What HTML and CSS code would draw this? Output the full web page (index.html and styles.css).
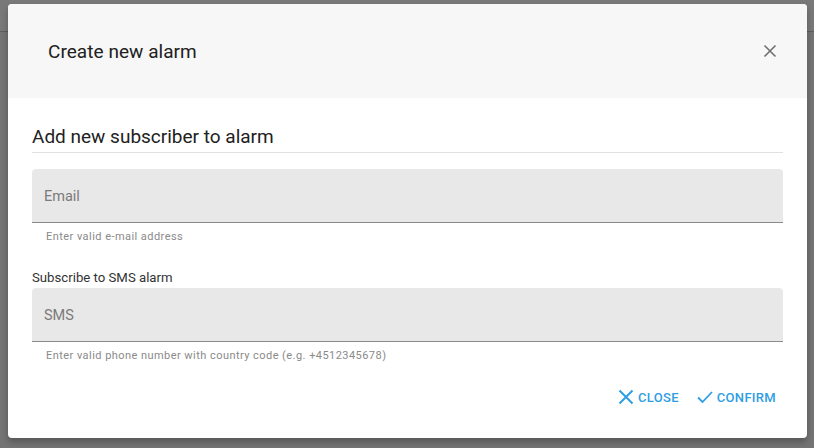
FILE: index.html
```html
<!DOCTYPE html>
<html>
<head>
<meta charset="utf-8">
<link rel="stylesheet" href="styles.css">
</head>
<body>
<div class="backdrop">
  <div class="topbar"></div>
  <div class="dialog">
    <div class="dialog-header">
      <h1 class="dialog-title">Create new alarm</h1>
      <button class="icon-close" aria-label="Close">
        <svg width="14" height="14" viewBox="0 0 14 14"><path d="M1.5 1.5L12.5 12.5M12.5 1.5L1.5 12.5" stroke="#6f6f6f" stroke-width="1.6" fill="none"/></svg>
      </button>
    </div>
    <div class="dialog-body">
      <h2 class="section-title">Add new subscriber to alarm</h2>
      <div class="field">
        <div class="field-box"><span class="placeholder">Email</span></div>
        <div class="hint">Enter valid e-mail address</div>
      </div>
      <div class="field-label">Subscribe to SMS alarm</div>
      <div class="field">
        <div class="field-box"><span class="placeholder">SMS</span></div>
        <div class="hint">Enter valid phone number with country code (e.g. +4512345678)</div>
      </div>
      <div class="actions">
        <button class="btn">
          <svg width="16" height="16" viewBox="0 0 16 16"><path d="M1.5 1.5L14.5 14.5M14.5 1.5L1.5 14.5" stroke="currentColor" stroke-width="2" fill="none"/></svg>
          CLOSE
        </button>
        <button class="btn">
          <svg width="16" height="16" viewBox="0 0 16 16"><path d="M1 8.5L5.5 13L15 3" stroke="currentColor" stroke-width="1.8" fill="none"/></svg>
          CONFIRM
        </button>
      </div>
    </div>
  </div>
</div>
</body>
</html>
```
FILE: styles.css
```css
* { box-sizing: border-box; }
html, body { margin: 0; padding: 0; }
body {
  font-family: Roboto, "Liberation Sans", sans-serif;
  width: 814px;
  height: 448px;
  overflow: hidden;
}
.backdrop {
  position: relative;
  width: 814px;
  height: 448px;
  background: #747474;
  padding: 4px 7px 0 8px;
}
.topbar {
  position: absolute;
  left: 0;
  right: 0;
  top: 0;
  height: 32px;
  border-bottom: 1px solid #5e5e5e;
  background: #797979;
}
.dialog {
  position: relative;
  background: #fff;
  border-radius: 4px;
  overflow: hidden;
  height: 434px;
  box-shadow: 0 4px 6px rgba(0,0,0,0.25);
}
.dialog-header {
  background: #f7f7f7;
  height: 94px;
  display: flex;
  align-items: center;
  justify-content: space-between;
  padding: 0 30px 0 40px;
}
.dialog-title {
  margin: 0;
  font-size: 19px;
  font-weight: 400;
  color: #212121;
  letter-spacing: 0.05px;
}
.icon-close {
  border: 0;
  background: none;
  padding: 0;
  width: 14px;
  height: 14px;
  display: flex;
}
.dialog-body {
  padding: 24px 24px 0 24px;
}
.section-title {
  margin: 0;
  font-size: 19px;
  font-weight: 400;
  color: #212121;
  padding-bottom: 3px;
  border-bottom: 1px solid #e0e0e0;
  line-height: 24px;
  padding-top: 3px;
}
.field { margin-top: 16px; }
.field-label + .field { margin-top: 2px; }
.field-box {
  height: 54px;
  background: #e8e8e8;
  border-radius: 4px 4px 0 0;
  border-bottom: 1px solid #8a8a8a;
  display: flex;
  align-items: center;
  padding: 2px 12px 0;
}
.placeholder {
  font-size: 14.5px;
  color: #7a7a7a;
}
.hint {
  font-size: 11px;
  color: #8a8a8a;
  padding: 7px 14px 0;
  letter-spacing: 0.45px;
  line-height: 14px;
}
.field-label {
  margin-top: 26px;
  font-size: 13.2px;
  color: #333;
  line-height: 16px;
}
.actions {
  display: flex;
  justify-content: flex-end;
  gap: 18px;
  margin-top: 26px;
  padding-right: 7px;
}
.btn {
  border: 0;
  background: none;
  padding: 0;
  font-family: Roboto, "Liberation Sans", sans-serif;
  font-weight: 500;
  font-size: 13px;
  color: #2f9ee3;
  display: flex;
  align-items: center;
  gap: 4px;
  letter-spacing: 0.3px;
}
```
